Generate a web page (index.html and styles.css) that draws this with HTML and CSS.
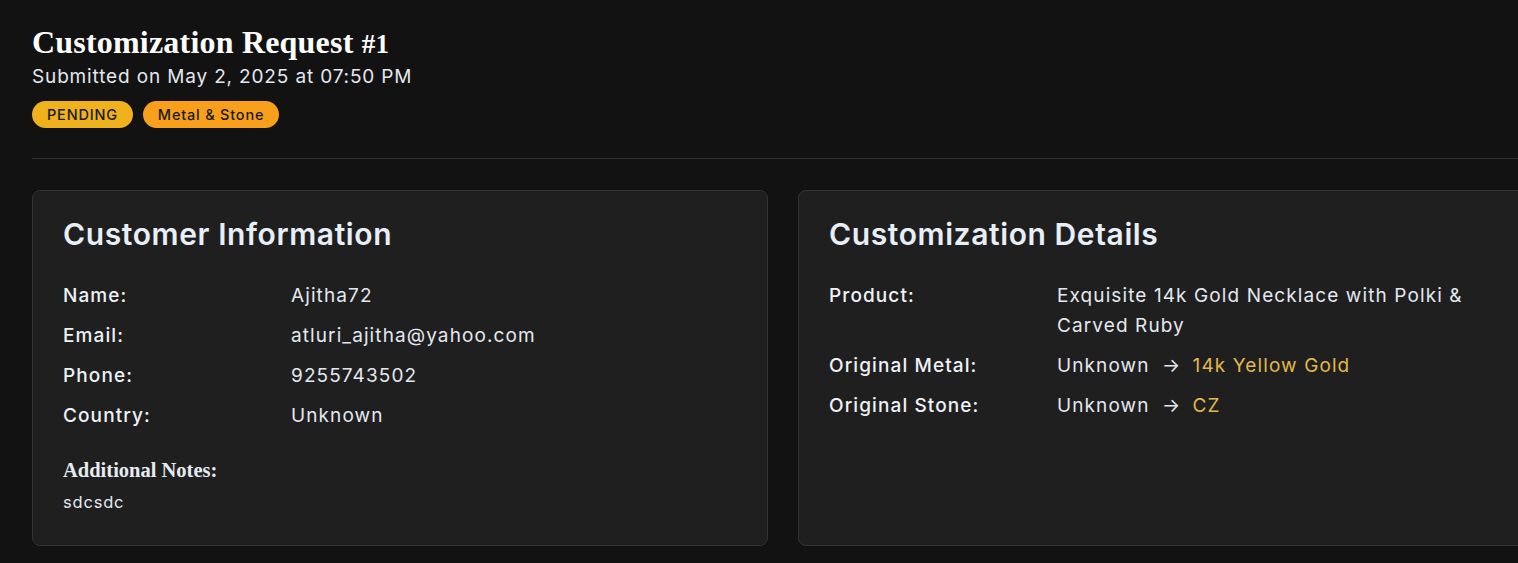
FILE: index.html
```html
<!DOCTYPE html>
<html lang="en">
<head>
<meta charset="utf-8">
<title>Customization Request #1</title>
<link rel="stylesheet" href="styles.css">
</head>
<body>
<main class="page">
  <header class="head">
    <h1 class="title">Customization Request <span class="num">#1</span></h1>
    <p class="sub">Submitted on May 2, 2025 at 07:50 PM</p>
    <div class="badges">
      <span class="badge pending">PENDING</span>
      <span class="badge type">Metal &amp; Stone</span>
    </div>
  </header>
  <hr class="divider">
  <section class="cards">
    <article class="card">
      <h2 class="card-title">Customer Information</h2>
      <dl class="rows">
        <dt>Name:</dt><dd>Ajitha72</dd>
        <dt>Email:</dt><dd>atluri_ajitha@yahoo.com</dd>
        <dt>Phone:</dt><dd>9255743502</dd>
        <dt>Country:</dt><dd>Unknown</dd>
      </dl>
      <h3 class="notes-title">Additional Notes:</h3>
      <p class="notes">sdcsdc</p>
    </article>
    <article class="card">
      <h2 class="card-title">Customization Details</h2>
      <dl class="rows">
        <dt>Product:</dt><dd>Exquisite 14k Gold Necklace with Polki &amp; Carved Ruby</dd>
        <dt>Original Metal:</dt><dd>Unknown <span class="arrow">→</span> <span class="gold">14k Yellow Gold</span></dd>
        <dt>Original Stone:</dt><dd>Unknown <span class="arrow">→</span> <span class="gold">CZ</span></dd>
      </dl>
    </article>
  </section>
</main>
</body>
</html>
```

FILE: styles.css
```css
html, body {
  margin: 0;
  padding: 0;
  background: #121212;
  overflow: hidden;
}
body {
  font-family: Inter, "Open Sans", sans-serif;
  color: #e6ebf2;
}
.page {
  width: 1503px;
  padding: 22px 0 0 32px;
}
.head {
  display: flex;
  flex-direction: column;
}
.title {
  margin: 0;
  font-family: "Liberation Serif", "DejaVu Serif", serif;
  font-weight: 700;
  font-size: 32px;
  line-height: 40px;
  color: #ffffff;
  letter-spacing: 0.2px;
}
.title .num {
  font-size: 27px;
}
.sub {
  margin: 0;
  font-size: 19px;
  line-height: 26px;
  color: #e3e8ef;
  letter-spacing: 0.85px;
}
.badges {
  display: flex;
  gap: 10px;
  margin-top: 11px;
}
.badge {
  display: inline-flex;
  align-items: center;
  height: 27px;
  padding: 0 15px;
  border-radius: 14px;
  font-size: 14.5px;
  font-weight: 500;
  color: #1a1a1a;
  letter-spacing: 0.8px;
}
.pending { background: #efb21c; }
.type { background: #f89f1b; }
.divider {
  margin: 30px 0 0 0;
  border: 0;
  border-top: 1px solid #2f2f2f;
}
.cards {
  display: grid;
  grid-template-columns: 736px 736px;
  gap: 30px;
  margin-top: 31px;
}
.card {
  background: #1f1f1f;
  border: 1px solid #333333;
  border-radius: 8px;
  padding: 23px 30px 32px;
  height: 299px;
}
.card-title {
  margin: 0;
  font-size: 30px;
  line-height: 40px;
  font-weight: 600;
  color: #e8eef6;
  letter-spacing: 0.6px;
}
.rows {
  display: grid;
  grid-template-columns: 228px 1fr;
  row-gap: 10px;
  margin: 27px 0 0 0;
  font-size: 19px;
  line-height: 30px;
}
.rows dt {
  font-weight: 500;
  color: #eef2f7;
  letter-spacing: 1.1px;
}
.rows dd {
  margin: 0;
  color: #e3e8ef;
  letter-spacing: 1.1px;
  max-width: 430px;
}
.arrow {
  display: inline-block;
  margin: 0 6px;
  font-size: 19px;
  letter-spacing: 0;
}
.gold { color: #e2b84b; }
.notes-title {
  margin: 26px 0 0 0;
  font-family: "Liberation Serif", "DejaVu Serif", serif;
  font-weight: 700;
  font-size: 20.5px;
  line-height: 26px;
  color: #e6ebf2;
}
.notes {
  margin: 7px 0 0 0;
  font-size: 16.5px;
  line-height: 24px;
  color: #e3e8ef;
  letter-spacing: 0.8px;
}
```
